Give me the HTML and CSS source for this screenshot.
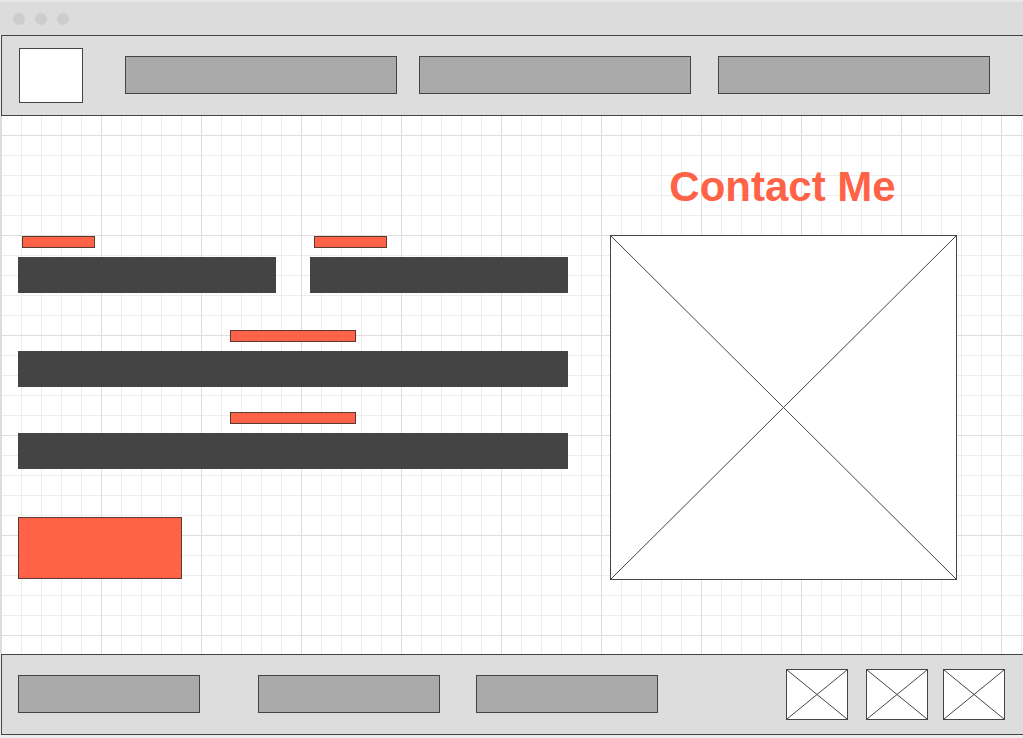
FILE: index.html
```html
<!DOCTYPE html>
<html lang="en">
<head>
    <meta charset="UTF-8">
    <meta name="viewport" content="width=device-width, initial-scale=1.0">
    <title>Contact Me - Wireframe</title>
    <link rel="stylesheet" href="styles.css">
</head>
<body>
    <div class="window">
        <div class="titlebar">
            <span class="dot"></span>
            <span class="dot"></span>
            <span class="dot"></span>
        </div>

        <header class="header">
            <div class="logo"></div>
            <div class="nav-item nav-first"></div>
            <div class="nav-item nav-second"></div>
            <div class="nav-item nav-third"></div>
        </header>

        <main class="main">
            <form class="contact-form">
                <div class="form-row">
                    <div class="field field-half">
                        <div class="label label-short"></div>
                        <div class="input"></div>
                    </div>
                    <div class="field field-half">
                        <div class="label label-short"></div>
                        <div class="input"></div>
                    </div>
                </div>

                <div class="field field-wide">
                    <div class="label label-long"></div>
                    <div class="input"></div>
                </div>

                <div class="field field-wide field-last">
                    <div class="label label-long"></div>
                    <div class="input"></div>
                </div>

                <div class="submit"></div>
            </form>

            <section class="contact-side">
                <h1>Contact Me</h1>
                <div class="placeholder big">
                    <svg viewBox="0 0 100 100" preserveAspectRatio="none">
                        <line x1="0" y1="0" x2="100" y2="100" vector-effect="non-scaling-stroke"/>
                        <line x1="100" y1="0" x2="0" y2="100" vector-effect="non-scaling-stroke"/>
                    </svg>
                </div>
            </section>
        </main>

        <footer class="footer">
            <div class="foot-link foot-first"></div>
            <div class="foot-link foot-second"></div>
            <div class="foot-link foot-third"></div>
            <div class="socials">
                <div class="placeholder small">
                    <svg viewBox="0 0 100 100" preserveAspectRatio="none">
                        <line x1="0" y1="0" x2="100" y2="100" vector-effect="non-scaling-stroke"/>
                        <line x1="100" y1="0" x2="0" y2="100" vector-effect="non-scaling-stroke"/>
                    </svg>
                </div>
                <div class="placeholder small second">
                    <svg viewBox="0 0 100 100" preserveAspectRatio="none">
                        <line x1="0" y1="0" x2="100" y2="100" vector-effect="non-scaling-stroke"/>
                        <line x1="100" y1="0" x2="0" y2="100" vector-effect="non-scaling-stroke"/>
                    </svg>
                </div>
                <div class="placeholder small third">
                    <svg viewBox="0 0 100 100" preserveAspectRatio="none">
                        <line x1="0" y1="0" x2="100" y2="100" vector-effect="non-scaling-stroke"/>
                        <line x1="100" y1="0" x2="0" y2="100" vector-effect="non-scaling-stroke"/>
                    </svg>
                </div>
            </div>
        </footer>
    </div>
</body>
</html>
```

FILE: styles.css
```css
body {
    margin: 0;
    font-family: "Liberation Sans", Arial, sans-serif;
    background-color: #ececec;
}
.window {
    width: 1023px;
    height: 738px;
    overflow: hidden;
    background-color: #ececec;
}
.titlebar {
    height: 35px;
    border-top: 2px solid #e8e8e8;
    background-color: #dcdcdc;
    display: flex;
    align-items: center;
    gap: 10px;
    padding-left: 13px;
    box-sizing: border-box;
}
.dot {
    width: 12px;
    height: 12px;
    border-radius: 50%;
    background-color: #cdcdcd;
}
.header {
    height: 81px;
    margin-left: 1px;
    border: 1px solid #444;
    border-right: none;
    background-color: #dddddd;
    box-sizing: border-box;
    display: flex;
    align-items: center;
    padding: 0 0 1px 17px;
}
.logo {
    width: 64px;
    height: 55px;
    background: #fff;
    border: 1px solid #444;
    box-sizing: border-box;
}
.nav-item {
    width: 272px;
    height: 38px;
    background-color: #aaaaaa;
    border: 1px solid #444;
    box-sizing: border-box;
}
.nav-first {
    margin-left: 42px;
}
.nav-second {
    margin-left: 22px;
}
.nav-third {
    margin-left: 27px;
}
.main {
    height: 538px;
    display: flex;
    border-left: 1px solid #dcdcdc;
    box-sizing: border-box;
    background-color: #fff;
    background-image:
        linear-gradient(#dedede 1px, transparent 1px),
        linear-gradient(90deg, #dedede 1px, transparent 1px),
        linear-gradient(#ededed 1px, transparent 1px),
        linear-gradient(90deg, #ededed 1px, transparent 1px);
    background-size: 100px 100px, 100px 100px, 20px 20px, 20px 20px;
    background-position: 0 19px, 0 0, 0 19px, 0 0;
}
.contact-form {
    width: 550px;
    margin-left: 17px;
    padding-top: 120px;
    display: flex;
    flex-direction: column;
}
.form-row {
    display: flex;
    gap: 34px;
}
.field {
    display: flex;
    flex-direction: column;
}
.field-half {
    width: 258px;
}
.field-wide {
    width: 550px;
    margin-top: 37px;
    align-items: center;
}
.field-last {
    margin-top: 25px;
}
.label {
    height: 12px;
    background-color: #ff6347;
    border: 1px solid #5b3a33;
    box-sizing: border-box;
    margin-bottom: 9px;
}
.label-short {
    width: 73px;
    margin-left: 4px;
}
.label-long {
    width: 126px;
}
.input {
    align-self: stretch;
    height: 36px;
    background-color: #444;
}
.submit {
    width: 164px;
    height: 62px;
    margin-top: 48px;
    background-color: #ff6347;
    border: 1px solid #5b3a33;
    box-sizing: border-box;
}
.contact-side {
    margin-left: 42px;
    width: 347px;
    display: flex;
    flex-direction: column;
}
.contact-side h1 {
    margin: 47px 2px 24px 0;
    height: 48px;
    font-size: 42px;
    line-height: 48px;
    font-weight: bold;
    color: #ff6347;
    text-align: center;
}
.placeholder {
    background: #fff;
    border: 1px solid #444;
    box-sizing: border-box;
}
.placeholder svg {
    display: block;
    width: 100%;
    height: 100%;
}
.placeholder line {
    stroke: #444;
    stroke-width: 1;
}
.big {
    width: 347px;
    height: 345px;
}
.footer {
    height: 81px;
    margin-left: 1px;
    border: 1px solid #444;
    border-right: none;
    background-color: #dddddd;
    box-sizing: border-box;
    display: flex;
    align-items: center;
    padding: 0 0 1px 16px;
}
.foot-link {
    width: 182px;
    height: 38px;
    background-color: #aaaaaa;
    border: 1px solid #444;
    box-sizing: border-box;
}
.foot-second {
    margin-left: 58px;
}
.foot-third {
    margin-left: 36px;
}
.socials {
    display: flex;
    margin-left: 128px;
}
.small {
    width: 62px;
    height: 51px;
}
.small.second {
    margin-left: 18px;
}
.small.third {
    margin-left: 15px;
}
```
